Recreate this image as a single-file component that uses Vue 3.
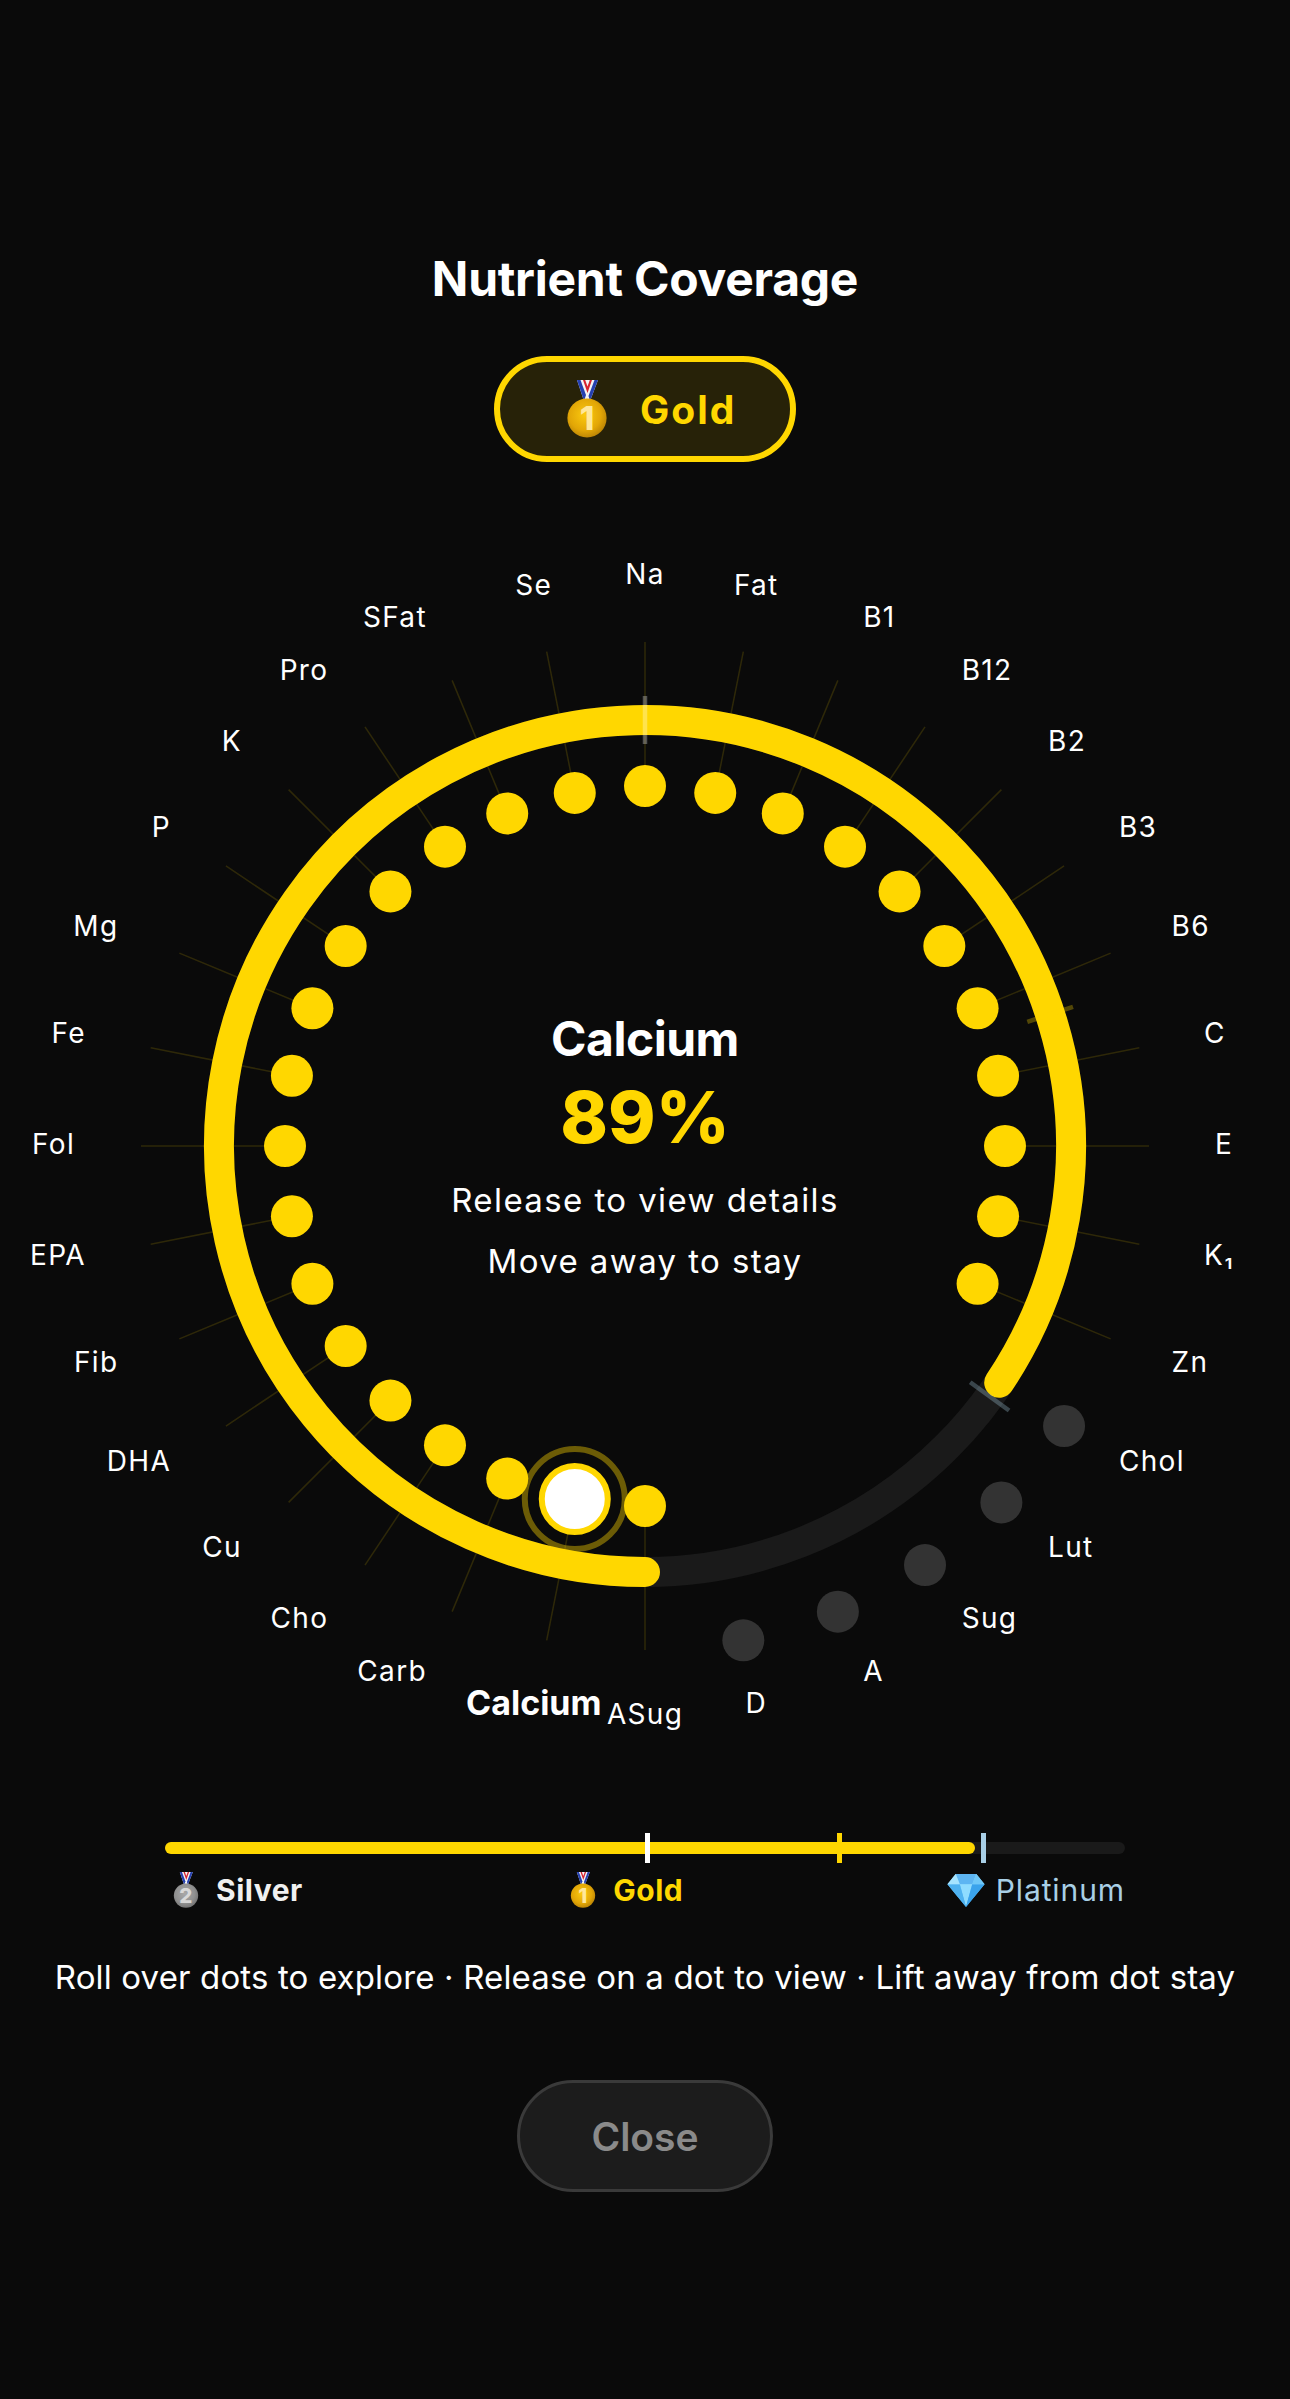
<script setup>
const cx = 645
const cy = 620
const names = ['Na','Fat','B1','B12','B2','B3','B6','C','E','K₁','Zn','Chol','Lut','Sug','A','D','ASug','Calcium','Carb','Cho','Cu','DHA','Fib','EPA','Fol','Fe','Mg','P','K','Pro','SFat','Se']
const pt = (deg, r) => {
  const a = (deg * Math.PI) / 180
  return { x: +(cx + r * Math.sin(a)).toFixed(2), y: +(cy - r * Math.cos(a)).toFixed(2) }
}
const nodes = names.map((name, i) => {
  const deg = i * 11.25
  const s = Math.sin((deg * Math.PI) / 180)
  const dim = i >= 11 && i <= 15
  const dot = pt(deg, dim ? 504 : 360)
  const inner = pt(deg, 360)
  const outer = pt(deg, 504)
  const lab = pt(deg, 570)
  const anchor = s > 0.2 ? 'start' : s < -0.2 ? 'end' : 'middle'
  return { name, i, dim, dot, inner, outer, lab, anchor, selected: name === 'Calcium' }
})
const ringR = 426
const start = pt(180, ringR)
const end = pt(123.75, ringR)
const arcPath = `M ${start.x} ${start.y} A ${ringR} ${ringR} 0 1 1 ${end.x} ${end.y}`
const markers = [
  { deg: 0, color: 'rgba(255,255,255,0.3)' },
  { deg: 72, color: 'rgba(255,215,0,0.3)' },
  { deg: 126, color: 'rgba(168,208,230,0.3)' }
].map(m => ({ ...m, a: pt(m.deg, 402), b: pt(m.deg, 450) }))
const sel = nodes.find(n => n.selected)
const ticks = [
  { left: 50, color: '#ffffff' },
  { left: 70, color: '#FFD700' },
  { left: 85, color: '#A8CFE6' }
]
const fillWidth = (27 / 32) * 100
</script>

<template>
  <main class="page">
    <svg class="defs" width="0" height="0" aria-hidden="true">
      <defs>
        <radialGradient id="gGold" cx="0.45" cy="0.42" r="0.62">
          <stop offset="0" stop-color="#fbc90f" />
          <stop offset="0.65" stop-color="#e2a606" />
          <stop offset="1" stop-color="#b68005" />
        </radialGradient>
        <radialGradient id="gSilver" cx="0.45" cy="0.42" r="0.62">
          <stop offset="0" stop-color="#a8a8a8" />
          <stop offset="0.65" stop-color="#909090" />
          <stop offset="1" stop-color="#707070" />
        </radialGradient>
        <linearGradient id="gGem" x1="0" y1="0" x2="0" y2="1">
          <stop offset="0" stop-color="#8fdcff" />
          <stop offset="1" stop-color="#2f9fee" />
        </linearGradient>
        <symbol id="ribbon" viewBox="0 0 40 58">
          <polygon points="10,0 31,0 23,21 17,21" fill="#f4f4f4" />
          <polygon points="10,0 13.5,0 19,15 17,21" fill="#2540b0" />
          <polygon points="27.5,0 31,0 23,21 21.5,16" fill="#2540b0" />
          <polygon points="16,0 25,0 20.5,13" fill="#d8232f" />
          <polygon points="18.2,0 22.8,0 20.5,6.5" fill="#f4f4f4" />
        </symbol>
      </defs>
    </svg>

    <h1 class="title">Nutrient Coverage</h1>

    <div class="badge">
      <svg class="medal-lg" viewBox="0 0 40 58">
        <use href="#ribbon" width="40" height="58" />
        <circle cx="20" cy="38" r="19.6" fill="url(#gGold)" />
        <text x="20" y="50" class="medal-num gold-num">1</text>
      </svg>
      <span class="badge-label">Gold</span>
    </div>

    <svg class="chart" width="1290" height="1240" viewBox="0 0 1290 1240">
      <g v-for="n in nodes" :key="'t' + n.i">
        <line v-if="!n.dim" :x1="n.inner.x" :y1="n.inner.y" :x2="n.outer.x" :y2="n.outer.y" class="tick" />
      </g>
      <circle :cx="cx" :cy="cy" :r="ringR" class="track" />
      <path :d="arcPath" class="arc" />
      <line v-for="m in markers" :key="m.deg" :x1="m.a.x" :y1="m.a.y" :x2="m.b.x" :y2="m.b.y" :stroke="m.color" stroke-width="4.5" />
      <circle :cx="sel.dot.x" :cy="sel.dot.y" r="50" class="halo" />
      <g v-for="n in nodes" :key="'d' + n.i">
        <circle v-if="!n.selected" :cx="n.dot.x" :cy="n.dot.y" r="21" :class="n.dim ? 'dot-dim' : 'dot-on'" />
      </g>
      <circle :cx="sel.dot.x" :cy="sel.dot.y" r="33" class="dot-sel" />
      <text
        v-for="n in nodes"
        :key="'l' + n.i"
        :x="n.lab.x"
        :y="n.lab.y + (n.selected ? 10 : 8)"
        :text-anchor="n.anchor"
        :class="n.selected ? 'lab-sel' : 'lab'"
      >{{ n.name }}</text>
      <text :x="cx" y="530" class="c-name">Calcium</text>
      <text :x="cx" y="617" class="c-pct">89%</text>
      <text :x="cx" y="686" class="c-sub">Release to view details</text>
      <text :x="cx" y="747" class="c-sub">Move away to stay</text>
    </svg>

    <div class="bar">
      <div class="bar-fill" :style="{ width: fillWidth + '%' }"></div>
      <span v-for="t in ticks" :key="t.left" class="bar-tick" :style="{ left: t.left + '%', background: t.color }"></span>
    </div>

    <div class="legend">
      <div class="leg">
        <svg class="medal-sm" viewBox="0 0 40 58">
          <use href="#ribbon" width="40" height="58" />
          <circle cx="20" cy="38" r="19.6" fill="url(#gSilver)" />
          <text x="20" y="50" class="medal-num silver-num">2</text>
        </svg>
        <span class="leg-silver">Silver</span>
      </div>
      <div class="leg">
        <svg class="medal-sm" viewBox="0 0 40 58">
          <use href="#ribbon" width="40" height="58" />
          <circle cx="20" cy="38" r="19.6" fill="url(#gGold)" />
          <text x="20" y="50" class="medal-num gold-num">1</text>
        </svg>
        <span class="leg-gold">Gold</span>
      </div>
      <div class="leg">
        <svg class="gem" viewBox="0 0 36 32">
          <polygon points="8,0 28,0 36,10 18,32 0,10" fill="url(#gGem)" />
          <polygon points="8,0 28,0 24,10 12,10" fill="#5db5f2" />
          <polygon points="12,10 24,10 18,32" fill="#8fdcff" />
          <polygon points="0,10 12,10 18,32" fill="#4fb2f0" />
          <polygon points="24,10 36,10 18,32" fill="#3aa3ec" />
          <polygon points="8,0 12,10 0,10" fill="#a6e4ff" />
          <polygon points="28,0 24,10 36,10" fill="#6fc8f8" />
        </svg>
        <span class="leg-plat">Platinum</span>
      </div>
    </div>

    <p class="hint">Roll over dots to explore · Release on a dot to view · Lift away from dot stay</p>

    <button class="close" type="button">Close</button>
  </main>
</template>

<style>
html, body { margin: 0; background: #0a0a0a; }
</style>

<style scoped>
.page {
  width: 1290px;
  height: 2399px;
  box-sizing: border-box;
  padding-top: 249px;
  display: flex;
  flex-direction: column;
  align-items: center;
  background: #0a0a0a;
  font-family: Inter, "Liberation Sans", sans-serif;
  color: #fff;
  overflow: hidden;
}
.defs { position: absolute; }
.title {
  margin: 0;
  font-size: 48px;
  line-height: 60px;
  font-weight: 700;
  letter-spacing: -0.25px;
}
.badge {
  margin-top: 47px;
  width: 302px;
  height: 106px;
  box-sizing: border-box;
  border: 6px solid #FFD700;
  border-radius: 53px;
  background: rgba(255, 215, 0, 0.12);
  display: flex;
  align-items: center;
  padding-left: 67px;
  gap: 33px;
}
.medal-lg { width: 40px; height: 58px; }
.badge-label {
  font-size: 39px;
  font-weight: 700;
  letter-spacing: 2px;
  color: #FFD700;
}
.medal-num {
  text-anchor: middle;
  font-family: Inter, sans-serif;
  font-size: 33px;
  font-weight: 800;
}
.gold-num { fill: #ffe79a; }
.silver-num { fill: #d8d8d8; }
.chart { margin-top: 64px; display: block; }
.tick { stroke: rgba(255, 215, 0, 0.15); stroke-width: 1.5; }
.track { fill: none; stroke: #1a1a1a; stroke-width: 30; }
.arc { fill: none; stroke: #FFD700; stroke-width: 30; stroke-linecap: round; }
.halo { fill: none; stroke: rgba(255, 215, 0, 0.4); stroke-width: 6; }
.dot-on { fill: #FFD700; }
.dot-dim { fill: #333; }
.dot-sel { fill: #fff; stroke: #FFD700; stroke-width: 6; }
.lab { fill: #fff; font-size: 28px; letter-spacing: 1.3px; }
.lab-sel { fill: #fff; font-size: 34px; font-weight: 700; text-anchor: middle; }
.c-name { fill: #fff; font-size: 48px; font-weight: 700; letter-spacing: -0.5px; text-anchor: middle; }
.c-pct { fill: #FFD700; font-size: 72px; font-weight: 800; text-anchor: middle; }
.c-sub { fill: #fff; font-size: 33px; letter-spacing: 1.4px; text-anchor: middle; }
.bar {
  position: relative;
  margin-top: 76px;
  width: 960px;
  height: 12px;
  border-radius: 6px;
  background: #1a1a1a;
}
.bar-fill { height: 100%; border-radius: 6px; background: #FFD700; }
.bar-tick { position: absolute; top: -9px; width: 5px; height: 30px; }
.legend {
  margin-top: 18px;
  width: 960px;
  height: 36px;
  display: flex;
  justify-content: space-between;
  align-items: center;
}
.leg { display: flex; align-items: center; gap: 9px; font-size: 30px; letter-spacing: 0.5px; }
.medal-sm { width: 42px; height: 36px; }
.gem { width: 38px; height: 33px; margin: 0 2px 0 4px; }
.leg-silver { font-weight: 700; color: #f0f0f0; }
.leg-gold { font-weight: 700; color: #FFD700; }
.leg-plat { font-weight: 400; color: #A8CFE6; letter-spacing: 0.9px; }
.hint {
  margin: 47px 0 0;
  font-size: 33px;
  line-height: 44px;
  letter-spacing: 0.15px;
  color: #fff;
  white-space: nowrap;
}
.close {
  margin-top: 81px;
  width: 256px;
  height: 112px;
  box-sizing: border-box;
  border: 3px solid #3a3a3a;
  border-radius: 56px;
  background: #1c1c1c;
  color: #8a8a8a;
  font-family: inherit;
  font-size: 39px;
  font-weight: 600;
  padding: 0;
}
</style>
